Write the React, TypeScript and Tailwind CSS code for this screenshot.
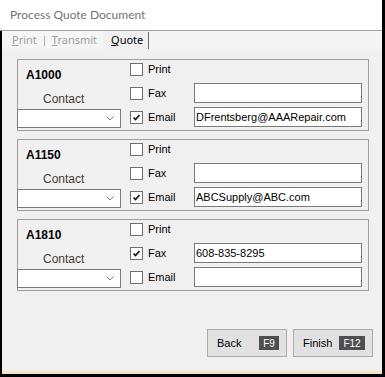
function Check() {
  return (
    <svg width="9" height="9" viewBox="0 0 9 9">
      <path d="M1.5 4.5 L3.5 6.5 L7.5 2" fill="none" stroke="#111" strokeWidth="1.6" />
    </svg>
  );
}

function Box({ checked }: { checked?: boolean }) {
  return (
    <span className="w-[13px] h-[13px] shrink-0 border border-[#6f6f6f] bg-white flex items-center justify-center">
      {checked && <Check />}
    </span>
  );
}

function Row({ label, checked, value, input }: { label: string; checked?: boolean; value?: string; input?: boolean }) {
  return (
    <div className="h-[24px] flex items-center">
      <Box checked={checked} />
      <span className="ml-[5px] w-[46px] text-[11px] text-black">{label}</span>
      {input && (
        <div className="w-[168px] h-[20px] border border-[#7a7a7a] bg-white flex items-center pl-[1px] text-[11px] text-black">
          {value}
        </div>
      )}
    </div>
  );
}

type Quote = { code: string; print?: boolean; fax?: boolean; email?: boolean; faxValue?: string; emailValue?: string };

function Group({ q }: { q: Quote }) {
  return (
    <div className="w-[352px] h-[72px] border border-[#a0a0a0] flex">
      <div className="w-[103px] flex flex-col">
        <div className="mt-[8px] pl-[8px] h-[14px] leading-[14px] text-[12px] font-bold text-black">{q.code}</div>
        <div className="mt-[10px] pl-[25px] h-[14px] leading-[14px] text-[12px] text-[#4a3c30]">Contact</div>
        <div className="mt-[3px] -ml-px w-[104px] h-[19px] border border-[#7a7a7a] bg-white flex items-center justify-end pr-[6px]">
          <svg width="8" height="5" viewBox="0 0 8 5">
            <path d="M0.5 0.5 L4 4 L7.5 0.5" fill="none" stroke="#777" strokeWidth="1" />
          </svg>
        </div>
      </div>
      <div className="ml-[9px] -mt-[3px] flex flex-col">
        <Row label="Print" checked={q.print} />
        <Row label="Fax" checked={q.fax} value={q.faxValue} input />
        <Row label="Email" checked={q.email} value={q.emailValue} input />
      </div>
    </div>
  );
}

function Btn({ label, keyName, badgeW }: { label: string; keyName: string; badgeW: string }) {
  return (
    <div className="w-[80px] h-[28px] bg-[#e1e1e1] border border-[#adadad] flex items-center justify-between pl-[9px] pr-[7px] text-[11px] text-black">
      <span>{label}</span>
      <span className={`${badgeW} h-[14px] bg-[#4f4f4f] text-white text-[10px] flex items-center justify-center`}>{keyName}</span>
    </div>
  );
}

export default function App() {
  const quotes: Quote[] = [
    { code: "A1000", email: true, emailValue: "DFrentsberg@AAARepair.com" },
    { code: "A1150", email: true, emailValue: "ABCSupply@ABC.com" },
    { code: "A1810", fax: true, faxValue: "608-835-8295" },
  ];
  return (
    <div className="w-[385px] h-[377px] flex flex-col bg-black" style={{ fontFamily: '"Liberation Sans", Arial, sans-serif' }}>
      <div className="h-[30px] mr-[3px] bg-white flex items-center pl-[10px] text-[12px] text-[#737373]" style={{ fontFamily: 'Lato, sans-serif' }}>
        Process Quote Document
      </div>
      <div className="h-px mr-[3px] bg-[#a0a0a0]" />
      <div className="flex-1 ml-[2px] mr-[3px] flex flex-col bg-[#f0f0f0]">
        <div className="h-[19px] bg-[#f5f5f5] flex items-center text-[11px] pl-[10px]" style={{ fontFamily: '"Noto Sans", sans-serif' }}>
          <span className="text-[#a0a0a0]"><span className="underline">P</span>rint</span>
          <span className="ml-[7px] w-px h-[10px] bg-[#b0b0b0]" />
          <span className="ml-[7px] text-[#a0a0a0]"><span className="underline">T</span>ransmit</span>
          <span className="ml-[6px] h-full bg-[#f0f0f0] pl-[8px] pr-[5px] flex items-center text-black"><span className="underline">Q</span>uote</span>
          <span className="w-px h-[17px] bg-[#6a6a6a]" />
        </div>
        <div className="flex-1 flex flex-col pl-[15px] pt-[9px]">
          <div className="flex flex-col gap-[8px]">
            {quotes.map((q) => (
              <Group key={q.code} q={q} />
            ))}
          </div>
          <div className="mt-[38px] ml-[190px] flex gap-[6px]">
            <Btn label="Back" keyName="F9" badgeW="w-[20px]" />
            <Btn label="Finish" keyName="F12" badgeW="w-[26px]" />
          </div>
        </div>
        <div className="h-[3px] bg-[#f7e4c4]" />
      </div>
      <div className="h-[3px]" />
    </div>
  );
}
